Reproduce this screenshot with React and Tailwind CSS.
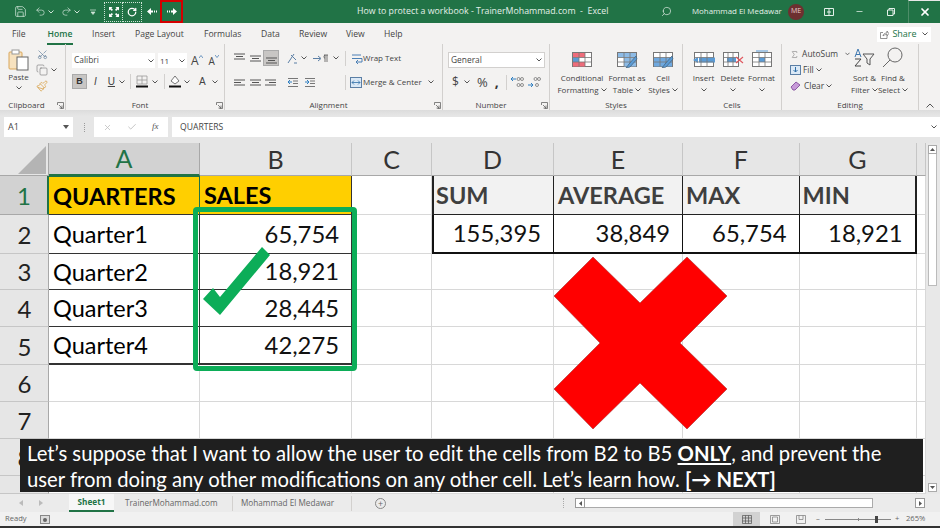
import { Save, Undo2, Redo2, RotateCw, Search, Minus, X, Check, Sigma, Scissors, Copy, Paintbrush } from 'lucide-react';

const Chev = ({ className = '' }) => (
    <svg width="6" height="4" viewBox="0 0 6 4" className={className}>
        <path d="M0.5 0.5 L3 3 L5.5 0.5" fill="none" stroke="#555" strokeWidth="1" />
    </svg>
);

const Launcher = ({ className = '' }) => (
    <svg width="7" height="7" viewBox="0 0 7 7" className={className}>
        <path d="M0.5 3 V0.5 H6.5 V6.5 H3.5 M2 3 L5 6 M5 3.5 V6 H2.5" fill="none" stroke="#666" strokeWidth="0.8" />
    </svg>
);

const Sep = ({ className = '' }) => <div className={`w-px h-[15px] bg-[#d2d0ce] ${className}`} />;

const Lines = ({ rows, className = '' }) => (
    <svg width="11" height="11" viewBox="0 0 11 11" className={className}>
        {rows.map(([x1, x2, y]) => (
            <path key={y} d={`M${x1} ${y} H${x2}`} stroke="#555" strokeWidth="1" />
        ))}
    </svg>
);

// tabelletje voor de grote knoppen in de ribbon
const TableIcon = ({ children, fill }) => (
    <svg width="22" height="20" viewBox="0 -2 22 20">
        <rect x="1.5" y="2.5" width="19" height="14" fill="#fff" stroke="#777" />
        {children}
        <path d="M1.5 7.5 H20.5 M1.5 12 H20.5 M8 2.5 V16.5 M14 2.5 V16.5" stroke="#777" strokeWidth="0.8" fill="none" />
        {fill}
    </svg>
);

const Brush = () => (
    <path d="M20 6 L13 14 L10 18 L14 17 L21 9 Z" fill="#5b9bd5" stroke="#44617b" strokeWidth="0.7" />
);

const Big = ({ w, icon, a, b, last = true }) => (
    <div className="flex flex-col items-center" style={{ width: w }}>
        <div className="h-[24px] flex items-end justify-center">{icon}</div>
        <div className="mt-[4px] h-[12px] leading-[12px] whitespace-nowrap">{a}</div>
        <div className="h-[11px] leading-[11px] whitespace-nowrap flex items-center gap-[2px]">
            {b}
            {last && <Chev />}
        </div>
    </div>
);

const Group = ({ w, label, launcher, children, labelClass = '' }) => (
    <div className="relative h-[66px] border-r border-[#d2d0ce] shrink-0" style={{ width: w }}>
        <div className="h-[55px]">{children}</div>
        <div className={`text-center leading-[11px] ${labelClass}`}>{label}</div>
        {launcher && <Launcher className="absolute right-[1px] bottom-[1px]" />}
    </div>
);

const Cell = ({ className = '', children }) => (
    <div className={`flex items-center pt-[2px] border-r border-b overflow-hidden whitespace-nowrap ${className}`}>{children}</div>
);

const Grid = ({ className = '', children }) => <Cell className={`border-[#d8d8d8] bg-white ${className}`}>{children}</Cell>;

const Head = ({ children, on }) => (
    <div className={`flex items-center justify-center pt-[1px] border-r text-[25px] font-[Lato,sans-serif] ${on ? 'bg-[#d2d2d2] border-[#a8a8a8] border-b-2 border-b-[#217346] text-[#217346]' : 'bg-[#e6e6e6] border-[#c6c6c6] border-b border-b-[#a8a8a8] text-[#333]'}`}>
        {children}
    </div>
);

const Row = ({ children, on }) => (
    <div className={`flex items-center justify-center pt-[2px] pl-[1px] border-b overflow-hidden text-[24px] font-[Lato,sans-serif] ${on ? 'bg-[#d2d2d2] border-[#a8a8a8] border-r-2 border-r-[#217346] text-[#217346]' : 'bg-[#e6e6e6] border-[#c6c6c6] border-r border-r-[#a8a8a8] text-[#222]'}`}>
        {children}
    </div>
);

const dark = 'border-[#333] bg-white text-black pl-[4px] text-[23.5px]';
const num = 'border-[#333] bg-white text-[#111] justify-end pr-[12px] text-[23.8px]';
const yellow = 'border-[#333] bg-[#ffcf00] text-black pl-[4px] font-bold text-[23.5px]';
const grey = 'border-[#222] bg-[#f2f2f2] text-[#3f3f3f] font-bold text-[23.5px]';
const num2 = 'border-[#111] bg-white text-[#111] justify-end pr-[12px] text-[23.8px]';

const App = () => {
    return (
        <div className="relative w-[940px] h-[528px] overflow-hidden flex flex-col bg-[#e6e6e6] text-[9px] text-[#444] font-['Open_Sans',sans-serif]">
            {/* titelbalk */}
            <div className="h-[23px] shrink-0 flex items-center bg-[#217346] text-white">
                <Save size={13} strokeWidth={1.4} className="ml-[14px] text-[#cfe4d7]" />
                <Undo2 size={11} strokeWidth={1.5} className="ml-[8px] text-[#cfe4d7]" />
                <Chev className="ml-[2px] [&_path]:stroke-[#cfe4d7]" />
                <Redo2 size={11} strokeWidth={1.5} className="ml-[7px] text-[#cfe4d7]" />
                <Chev className="ml-[2px] [&_path]:stroke-[#cfe4d7]" />
                <svg width="6" height="6" viewBox="0 0 6 6" className="ml-[10px]">
                    <path d="M0 1 H6 M1 3 L3 5.5 L5 3 Z" stroke="#cfe4d7" fill="#cfe4d7" strokeWidth="0.7" />
                </svg>
                <div className="ml-[8px] h-[20px] w-[19px] flex items-center justify-center border border-dotted border-[#cfe4d7]">
                    <svg width="10" height="10" viewBox="0 0 10 10">
                        <path d="M0 0 H3.5 L2.4 1.2 L4 2.8 L2.8 4 L1.2 2.4 L0 3.5 Z M10 0 H6.5 L7.6 1.2 L6 2.8 L7.2 4 L8.8 2.4 L10 3.5 Z M0 10 H3.5 L2.4 8.8 L4 7.2 L2.8 6 L1.2 7.6 L0 6.5 Z M10 10 H6.5 L7.6 8.8 L6 7.2 L7.2 6 L8.8 7.6 L10 6.5 Z" fill="#fff" />
                    </svg>
                </div>
                <div className="h-[20px] w-[19px] flex items-center justify-center border border-l-0 border-dotted border-[#cfe4d7]">
                    <RotateCw size={10} strokeWidth={3} />
                </div>
                <svg width="10" height="7" viewBox="0 0 10 7" className="ml-[5px]">
                    <path d="M0 3.5 L4 0 V7 Z M4 2.5 H6 V4.5 H4 Z M7 2.5 H8 V4.5 H7 Z M9 2.5 H10 V4.5 H9 Z" fill="#fff" />
                </svg>
                <div className="ml-[3px] h-[23px] w-[23px] flex items-center justify-center border-2 border-[#d40000]">
                    <svg width="10" height="7" viewBox="0 0 10 7">
                        <path d="M10 3.5 L6 0 V7 Z M6 2.5 H4 V4.5 H6 Z M3 2.5 H2 V4.5 H3 Z M1 2.5 H0 V4.5 H1 Z" fill="#fff" />
                    </svg>
                </div>
                <div className="ml-[174px] w-[230px] whitespace-nowrap text-[8.8px] text-[#e4f0e9]">How to protect a workbook - TrainerMohammad.com&nbsp; -&nbsp; Excel</div>
                <Search size={11} strokeWidth={1.6} className="ml-[74px] -scale-x-100 text-[#d8e8de]" />
                <div className="ml-[20px] w-[90px] whitespace-nowrap text-[7.9px] text-[#e4f0e9]">Mohammad El Medawar</div>
                <div className="ml-[6px] w-[16px] h-[16px] rounded-full bg-[#6d3030] flex items-center justify-center text-[7px] text-[#e6cfcf]">ME</div>
                <svg width="10" height="8" viewBox="0 0 10 8" className="ml-[20px]">
                    <path d="M0.5 0.5 H9.5 V7.5 H0.5 Z M5 0.5 V7.5 M3 4 H7" fill="none" stroke="#e4f0e9" />
                </svg>
                <Minus size={9} className="ml-[21px] text-[#e4f0e9]" />
                <svg width="8" height="8" viewBox="0 0 8 8" className="ml-[23px]">
                    <path d="M0.5 2 H6 V7.5 H0.5 Z M2 2 V0.5 H7.5 V6 H6" fill="none" stroke="#e4f0e9" />
                </svg>
                <div className="ml-[13px] h-[23px] flex-1 flex items-center justify-center border-l border-[#4d8d68] border-t border-t-[#e8e8e8]">
                    <X size={12} strokeWidth={3.5} />
                </div>
            </div>

            {/* menu */}
            <div className="h-[21px] shrink-0 flex items-center pt-[1px] bg-[#f3f2f1] text-[8.6px] whitespace-nowrap">
                <span className="ml-[12px] w-[35px]">File</span>
                <div className="w-[26px] h-[21px] flex flex-col items-center justify-center relative text-[#217346] font-semibold">
                    <span>Home</span>
                    <div className="absolute bottom-[0px] left-0 right-0 h-[2px] bg-[#217346]" />
                </div>
                <span className="ml-[19px] w-[43px]">Insert</span>
                <span className="w-[69px]">Page Layout</span>
                <span className="w-[57px]">Formulas</span>
                <span className="w-[38px]">Data</span>
                <span className="w-[47px]">Review</span>
                <span className="w-[38px]">View</span>
                <span>Help</span>
                <div className="ml-auto mr-[9px] h-[15px] w-[54px] bg-white flex items-center justify-center gap-[3px] text-[9px] text-[#217346]">
                    <svg width="9" height="9" viewBox="0 0 9 9">
                        <path d="M3 2.5 H0.5 V8.5 H7 V6 M3 6 C3 4 5 3 7 3 V1 L8.8 3.5 L7 6 V4.5 C5 4.5 4 5 3 6Z" fill="none" stroke="#666" strokeWidth="0.7" />
                    </svg>
                    <span>Share</span>
                    <Chev className="ml-[2px]" />
                </div>
            </div>

            {/* ribbon */}
            <div className="h-[66px] shrink-0 flex bg-[#f3f2f1] text-[8px]">
                <Group w={66} label="Clipboard" launcher labelClass="pr-[12px]">
                    <div className="flex">
                        <div className="w-[36px] pl-[1px] flex flex-col items-center pt-[5px]">
                            <svg width="21" height="22" viewBox="0 0 21 22">
                                <rect x="1" y="3" width="13" height="17" rx="1" fill="#f7e2bf" stroke="#d9a65a" />
                                <rect x="4" y="1" width="7" height="4" fill="#fff" stroke="#999" />
                                <rect x="9" y="8" width="11" height="13" fill="#fff" stroke="#666" />
                            </svg>
                            <span className="leading-[11px]">Paste</span>
                            <Chev className="mt-[4px]" />
                        </div>
                        <div className="flex flex-col pt-[5px] gap-[4px]">
                            <Scissors size={11} strokeWidth={1.2} className="ml-[1px] text-[#44678a] -rotate-90" />
                            <div className="flex items-center gap-[3px]">
                                <Copy size={12} strokeWidth={1.1} className="text-[#666]" />
                                <Chev />
                            </div>
                            <Paintbrush size={12} strokeWidth={1.4} className="text-[#d69a3a]" />
                        </div>
                    </div>
                </Group>

                <Group w={159} label="Font" launcher labelClass="pr-[10px]">
                    <div className="flex items-center pl-[6px] pt-[9px]">
                        <div className="w-[83px] h-[15px] bg-white flex items-center pl-[2px] justify-between pr-[1px] text-[8.4px]">
                            Calibri
                            <Chev />
                        </div>
                        <div className="ml-[3px] w-[29px] h-[15px] bg-white flex items-center pl-[2px] justify-between pr-[2px]">
                            11
                            <Chev />
                        </div>
                        <span className="ml-[4px] text-[12px] leading-[12px]">A</span>
                        <svg width="4" height="3" viewBox="0 0 4 3" className="self-start mt-[2px]"><path d="M0 3 L2 0.5 L4 3" fill="none" stroke="#4a7fb5" strokeWidth="0.8" /></svg>
                        <span className="ml-[6px] text-[10px] leading-[12px]">A</span>
                        <svg width="4" height="3" viewBox="0 0 4 3" className="self-start mt-[2px]"><path d="M0 0 L2 2.5 L4 0" fill="none" stroke="#4a7fb5" strokeWidth="0.8" /></svg>
                    </div>
                    <div className="flex items-center pl-[6px] mt-[6px] text-[9px] font-['Liberation_Sans',sans-serif]">
                        <div className="w-[15px] h-[15px] bg-[#c8c6c4] border border-[#aaa] flex items-center justify-center font-bold text-[#333]">B</div>
                        <span className="ml-[7px] italic text-[10px]">I</span>
                        <span className="ml-[11px] underline text-[10px]">U</span>
                        <Chev className="ml-[4px]" />
                        <Sep className="ml-[5px]" />
                        <svg width="12" height="13" viewBox="0 0 12 13" className="ml-[5px]">
                            <path d="M1 1 H11 V9 H1 Z M6 1 V9 M1 5 H11" fill="none" stroke="#999" strokeWidth="0.8" />
                            <path d="M0 11.5 H12" stroke="#111" strokeWidth="2" />
                        </svg>
                        <Chev className="ml-[4px]" />
                        <Sep className="ml-[6px]" />
                        <svg width="12" height="13" viewBox="0 0 12 13" className="ml-[4px]">
                            <path d="M6 1 L10 6 L6 9 L2 6 Z" fill="#fff" stroke="#555" strokeWidth="0.8" />
                            <path d="M0 11.5 H12" stroke="#111" strokeWidth="2" />
                        </svg>
                        <Chev className="ml-[3px]" />
                        <span className="ml-[9px] text-[10px]">A</span>
                        <Chev className="ml-[6px]" />
                    </div>
                </Group>

                <Group w={218} label="Alignment" launcher labelClass="pr-[10px]">
                    <div className="flex items-center pl-[9px] pt-[5px] h-[23px]">
                        <Lines rows={[[0, 11, 1], [2, 9, 3.5], [0, 11, 6]]} />
                        <Lines rows={[[0, 11, 3], [2, 9, 5.5], [0, 11, 8]]} className="ml-[5px]" />
                        <div className="ml-[2px] w-[16px] h-[16px] bg-[#c8c6c4] border border-[#aaa] flex items-center justify-center">
                            <Lines rows={[[0, 11, 5], [2, 9, 7.5], [0, 11, 10]]} />
                        </div>
                        <svg width="11" height="11" viewBox="0 0 11 11" className="ml-[8px]">
                            <path d="M1 10 L7 1 M4 2 L9 7 M7 10 H10" fill="none" stroke="#5b7fa5" />
                        </svg>
                        <Chev className="ml-[3px]" />
                        <svg width="18" height="9" viewBox="0 0 18 9" className="ml-[6px]">
                            <path d="M0 4.5 H7 M5 2 L8 4.5 L5 7" fill="none" stroke="#5b7fa5" />
                            <path d="M11 1 H15 M12 1 V8 M14 1 V8 M12 1 A2 2 0 0 0 12 4.5" fill="none" stroke="#555" strokeWidth="0.8" />
                        </svg>
                        <Chev className="ml-[2px]" />
                        <Sep className="ml-[6px]" />
                        <svg width="11" height="11" viewBox="0 0 11 11" className="ml-[6px]">
                            <path d="M0 2 H9 M0 5.5 H10 V9 H4 M6 7 L4 9 L6 11" fill="none" stroke="#4a7fb5" strokeWidth="1" />
                        </svg>
                        <span className="whitespace-nowrap">Wrap Text</span>
                    </div>
                    <div className="flex items-center pl-[9px] mt-[6px] h-[18px]">
                        <Lines rows={[[0, 11, 3], [0, 7, 5.5], [0, 11, 8]]} />
                        <Lines rows={[[0, 11, 3], [2, 9, 5.5], [0, 11, 8]]} className="ml-[5px]" />
                        <Lines rows={[[0, 11, 3], [4, 11, 5.5], [0, 11, 8]]} className="ml-[4px]" />
                        <svg width="10" height="9" viewBox="0 0 10 9" className="ml-[12px]">
                            <path d="M0 0.5 H10 M5 3 H10 M5 5.5 H10 M0 8.5 H10" stroke="#777" fill="none" />
                            <path d="M4 4 H0 M2 2 L0 4 L2 6" stroke="#2f7fc1" fill="none" />
                        </svg>
                        <svg width="10" height="9" viewBox="0 0 10 9" className="ml-[7px]">
                            <path d="M0 0.5 H10 M5 3 H10 M5 5.5 H10 M0 8.5 H10" stroke="#777" fill="none" />
                            <path d="M0 4 H4 M2 2 L4 4 L2 6" stroke="#2f7fc1" fill="none" />
                        </svg>
                        <Sep className="ml-[30px]" />
                        <svg width="12" height="11" viewBox="0 0 12 11" className="ml-[4px]">
                            <rect x="0.5" y="0.5" width="11" height="10" fill="#dbe9f6" stroke="#5b7fa5" />
                            <path d="M2 5.5 H10 M4 3.5 L2 5.5 L4 7.5 M8 3.5 L10 5.5 L8 7.5" fill="none" stroke="#2f6fa8" strokeWidth="0.8" />
                        </svg>
                        <span className="ml-px whitespace-nowrap">Merge &amp; Center</span>
                        <Chev className="ml-[6px]" />
                    </div>
                </Group>

                <Group w={107} label="Number" launcher labelClass="pr-[10px]">
                    <div className="pl-[5px] pt-[8px]">
                        <div className="w-[97px] h-[16px] bg-white border border-[#d2d0ce] flex items-center pl-[2px] justify-between pr-[2px] text-[8.4px]">
                            General
                            <Chev />
                        </div>
                    </div>
                    <div className="flex items-center pl-[9px] mt-[5px] h-[18px]">
                        <span className="text-[12px] leading-[14px]">$</span>
                        <Chev className="ml-[5px]" />
                        <span className="ml-[7px] text-[13px] leading-[13px]">%</span>
                        <span className="ml-[7px] text-[14px] leading-[10px] font-bold text-[#333]">,</span>
                        <Sep className="ml-[7px]" />
                        <svg width="13" height="12" viewBox="0 0 13 12" className="ml-[4px]">
                            <path d="M0 3 H5 M2 1 L0 3 L2 5" fill="none" stroke="#2f7fc1" />
                            <circle cx="7.5" cy="3" r="1.5" fill="none" stroke="#666" strokeWidth="0.7" />
                            <circle cx="11" cy="3" r="1.5" fill="none" stroke="#666" strokeWidth="0.7" />
                            <circle cx="7.5" cy="9" r="1.5" fill="none" stroke="#666" strokeWidth="0.7" />
                            <circle cx="11" cy="9" r="1.5" fill="none" stroke="#666" strokeWidth="0.7" />
                        </svg>
                        <svg width="13" height="12" viewBox="0 0 13 12" className="ml-[4px]">
                            <circle cx="7.5" cy="3" r="1.5" fill="none" stroke="#666" strokeWidth="0.7" />
                            <circle cx="11" cy="3" r="1.5" fill="none" stroke="#666" strokeWidth="0.7" />
                            <path d="M0 9 H5 M3 7 L5 9 L3 11" fill="none" stroke="#2f7fc1" />
                            <circle cx="9" cy="9" r="1.5" fill="none" stroke="#666" strokeWidth="0.7" />
                        </svg>
                    </div>
                </Group>

                <Group w={133} label="Styles">
                    <div className="flex pl-[10px]">
                        <Big w={44} a="Conditional" b="Formatting" icon={
                            <TableIcon>
                                <rect x="2" y="3" width="12" height="4.5" fill="#ee6d7b" />
                                <rect x="2" y="7.5" width="6" height="4.5" fill="#5b9bd5" />
                                <rect x="2" y="12" width="12" height="4.5" fill="#ee6d7b" />
                            </TableIcon>
                        } />
                        <Big w={46} a="Format as" b="Table" icon={
                            <TableIcon fill={<Brush />}>
                                <rect x="2" y="3" width="18" height="4.5" fill="#8dbbe6" />
                                <rect x="8" y="7.5" width="12" height="9" fill="#8dbbe6" />
                            </TableIcon>
                        } />
                        <Big w={26} a="Cell" b="Styles" icon={
                            <TableIcon fill={<Brush />}>
                                <rect x="2" y="7.5" width="18" height="9" fill="#6fa9e0" />
                            </TableIcon>
                        } />
                    </div>
                </Group>

                <Group w={99} label="Cells">
                    <div className="flex pl-[6px]">
                        <Big w={29} a="Insert" b="" icon={
                            <TableIcon>
                                <rect x="6" y="7.5" width="16" height="5" fill="#5b9bd5" />
                                <path d="M0 10 L5 7 V13 Z" fill="#5b9bd5" />
                            </TableIcon>
                        } />
                        <Big w={29} a="Delete" b="" icon={
                            <svg width="22" height="20" viewBox="0 -2 22 20">
                                <rect x="1.5" y="2.5" width="15" height="14" fill="#fff" stroke="#777" />
                                <rect x="5" y="7.5" width="9" height="4.5" fill="#5b9bd5" />
                                <path d="M1.5 7.5 H16 M1.5 12 H16 M6 2.5 V16.5 M11 2.5 V16.5" stroke="#777" strokeWidth="0.8" />
                                <path d="M14 7 L21 13 M21 7 L14 13" stroke="#e0565e" strokeWidth="1.1" />
                            </svg>
                        } />
                        <Big w={29} a="Format" b="" icon={
                            <TableIcon>
                                <rect x="8" y="7.5" width="6" height="4.5" fill="#5b9bd5" />
                                <path d="M5 1 H17" stroke="#5b9bd5" />
                            </TableIcon>
                        } />
                    </div>
                </Group>

                <Group w={137} label="Editing">
                    <div className="flex">
                        <div className="w-[68px] pl-[8px] pt-[3px] flex flex-col gap-[2px] shrink-0 text-[8.4px]">
                            <div className="flex items-center h-[14px]">
                                <Sigma size={11} strokeWidth={1.3} className="text-[#666]" />
                                <span className="ml-[3px]">AutoSum</span>
                                <Chev className="ml-[7px]" />
                            </div>
                            <div className="flex items-center h-[14px]">
                                <svg width="11" height="10" viewBox="0 0 11 10">
                                    <rect x="0.5" y="0.5" width="10" height="9" fill="#dbe9f6" stroke="#5b7fa5" />
                                    <path d="M5.5 2 V7 M3.5 5 L5.5 7 L7.5 5" stroke="#2f6fa8" fill="none" />
                                </svg>
                                <span className="ml-[2px]">Fill</span>
                                <Chev className="ml-[2px]" />
                            </div>
                            <div className="flex items-center h-[14px]">
                                <svg width="11" height="10" viewBox="0 0 11 10">
                                    <path d="M1 6 L6 1 L10 4 L5 9 H3 Z" fill="#c79ad8" stroke="#8d5aa5" />
                                </svg>
                                <span className="ml-[3px]">Clear</span>
                                <Chev className="ml-[2px]" />
                            </div>
                        </div>
                        <div className="flex">
                            <Big w={29} a="Sort &amp;" b="Filter" icon={
                                <svg width="22" height="20" viewBox="0 0 22 20">
                                    <path d="M1 9 L4 1 L7 9 M2 6.5 H6" fill="none" stroke="#3f78b0" />
                                    <path d="M1 11 H7 L1 18 H7" fill="none" stroke="#444" />
                                    <path d="M9 6 H20 L16 11 V17 L13 15 V11 Z" fill="none" stroke="#555" />
                                </svg>
                            } />
                            <Big w={28} a="Find &amp;" b="Select" icon={
                                <svg width="22" height="22" viewBox="0 0 22 22">
                                    <circle cx="13" cy="9" r="7" fill="none" stroke="#666" />
                                    <path d="M8 14 L1 21" stroke="#666" />
                                </svg>
                            } />
                        </div>
                    </div>
                </Group>
                <div className="flex-1 flex items-end justify-center pb-[2px]">
                    <svg width="8" height="5" viewBox="0 0 8 5">
                        <path d="M0.5 4.5 L4 1 L7.5 4.5" fill="none" stroke="#555" />
                    </svg>
                </div>
            </div>

            {/* formulebalk */}
            <div className="h-[33px] shrink-0 pt-[7px] flex items-start bg-[linear-gradient(#dcdcdc,#e6e6e6_6px)]">
                <div className="ml-[4px] w-[69px] h-[20px] bg-white flex items-center justify-between pl-[4px] pr-[4px]">
                    A1
                    <svg width="6" height="4" viewBox="0 0 6 4"><path d="M0 0 H6 L3 4Z" fill="#555" /></svg>
                </div>
                <div className="ml-[11px] mt-[6px] h-[9px] w-px border-l border-dotted border-[#999]" />
                <div className="ml-[9px] w-[74px] h-[20px] bg-white flex items-center pl-[9px] text-[#bbb]">
                    <X size={9} />
                    <Check size={10} className="ml-[15px]" />
                    <span className="ml-[15px] text-[#555] italic font-['Liberation_Serif',serif]">fx</span>
                </div>
                <div className="ml-[4px] w-[768px] h-[20px] bg-white flex items-center pl-[8px] justify-between pr-[3px] text-[8.6px]">
                    QUARTERS
                    <Chev />
                </div>
            </div>

            {/* werkblad */}
            <div className="relative flex h-[351px] shrink-0">
                <div className="grid grid-cols-[49px_151px_152px_80px_122px_129px_116.5px_117px_9.5px] grid-rows-[33px_39px_38.5px_36.5px_37px_38px_37px_37px_37px_18px] font-[Lato,sans-serif]">
                    <div className="bg-[#e6e6e6] border-r border-b border-[#a8a8a8] flex items-end justify-end pr-[1px] pb-[1px]">
                        <svg width="29" height="28" viewBox="0 0 29 28"><path d="M28 0 V28 H0 Z" fill="#b4b4b4" /></svg>
                    </div>
                    <Head on>A</Head><Head>B</Head><Head>C</Head><Head>D</Head><Head>E</Head><Head>F</Head><Head>G</Head><Head />

                    <Row on>1</Row>
                    <Cell className={`${yellow} border-t border-t-[#217346] border-r-[#217346]`}>QUARTERS</Cell>
                    <Cell className={yellow}>SALES</Cell>
                    <Grid />
                    <Cell className={`${grey} border-l-2 pl-[2px]`}>SUM</Cell>
                    <Cell className={`${grey} pl-[4px]`}>AVERAGE</Cell>
                    <Cell className={`${grey} pl-[3px]`}>MAX</Cell>
                    <Cell className={`${grey} border-r-2 pl-[3px]`}>MIN</Cell>
                    <Grid />

                    <Row>2</Row>
                    <Cell className={dark}>Quarter1</Cell>
                    <Cell className={num}>65,754</Cell>
                    <Grid />
                    <Cell className={`${num2} border-l-2 border-b-2`}>155,395</Cell>
                    <Cell className={`${num2} border-b-2`}>38,849</Cell>
                    <Cell className={`${num2} border-b-2`}>65,754</Cell>
                    <Cell className={`${num2} border-b-2 border-r-2`}>18,921</Cell>
                    <Grid />

                    <Row>3</Row>
                    <Cell className={dark}>Quarter2</Cell>
                    <Cell className={num}>18,921</Cell>
                    <Grid /><Grid /><Grid /><Grid /><Grid /><Grid />

                    <Row>4</Row>
                    <Cell className={dark}>Quarter3</Cell>
                    <Cell className={num}>28,445</Cell>
                    <Grid /><Grid /><Grid /><Grid /><Grid /><Grid />

                    <Row>5</Row>
                    <Cell className={`${dark} border-b-2`}>Quarter4</Cell>
                    <Cell className={`${num} border-b-2`}>42,275</Cell>
                    <Grid /><Grid /><Grid /><Grid /><Grid /><Grid />

                    <Row>6</Row>
                    <Grid /><Grid /><Grid /><Grid /><Grid /><Grid /><Grid /><Grid />
                    <Row>7</Row>
                    <Grid /><Grid /><Grid /><Grid /><Grid /><Grid /><Grid /><Grid />
                    <Row>8</Row>
                    <Grid /><Grid /><Grid /><Grid /><Grid /><Grid /><Grid /><Grid />
                    <Row />
                    <Grid /><Grid /><Grid /><Grid /><Grid /><Grid /><Grid /><Grid />
                </div>

                {/* schuifbalk rechts */}
                <div className="flex-1 pt-[2px] pl-[2px] pr-[3px] flex flex-col bg-[#e8e8e8]">
                    <div className="h-[9px] bg-white border border-[#aaa] flex items-center justify-center">
                        <svg width="5" height="3" viewBox="0 0 5 3"><path d="M2.5 0 L5 3 H0Z" fill="#555" /></svg>
                    </div>
                    <div className="h-[132px] bg-white border border-[#bbb] border-t-0" />
                    <div className="mt-auto mb-[2px] h-[9px] bg-white border border-[#aaa] flex items-center justify-center">
                        <svg width="5" height="3" viewBox="0 0 5 3"><path d="M2.5 3 L5 0 H0Z" fill="#555" /></svg>
                    </div>
                </div>

                {/* vormen over het werkblad */}
                <svg width="940" height="351" viewBox="0 143 940 351" className="absolute inset-0 pointer-events-none">
                    <rect x="195.5" y="209.5" width="159" height="159" rx="1.5" fill="none" stroke="#0cad58" strokeWidth="5" />
                    <path d="M203 299 L213 288 L220 297 L262 247 L270 255 L220 315 Z" fill="#0cad58" />
                    <path d="M593 257 L640 303 L687 257 L727 296 L680 343 L727 389 L687 429 L640 383 L593 429 L554 389 L600 343 L554 296 Z" fill="#ff0000" stroke="#a83232" strokeWidth="0.6" />
                </svg>

                <div className="absolute left-[20px] top-[296px] w-[903px] h-[53px] bg-[#1f1f1f] pl-[7px] pt-[1px] text-[20.25px] leading-[26px] text-white whitespace-nowrap font-[Lato,sans-serif]">
                    <div>Let’s suppose that I want to allow the user to edit the cells from B2 to B5 <b className="underline">ONLY</b>, and prevent the</div>
                    <div>user from doing any other modifications on any other cell. Let’s learn how. <b>[→ NEXT]</b></div>
                </div>
            </div>

            {/* bladtabs */}
            <div className="h-[18px] shrink-0 flex items-center bg-[#ebebeb] text-[8.2px] text-[#666]">
                <svg width="4" height="6" viewBox="0 0 4 6" className="ml-[19px]"><path d="M4 0 V6 L0 3Z" fill="#bbb" /></svg>
                <svg width="4" height="6" viewBox="0 0 4 6" className="ml-[16px]"><path d="M0 0 V6 L4 3Z" fill="#bbb" /></svg>
                <div className="ml-[26px] w-[45px] h-[18px] bg-[#f7f7f7] border-b-2 border-[#217346] flex items-center justify-center font-bold text-[#217346]">Sheet1</div>
                <span className="ml-[11px] w-[96px] whitespace-nowrap">TrainerMohammad.com</span>
                <Sep className="ml-[11px]" />
                <span className="ml-[8px] w-[100px] whitespace-nowrap">Mohammad El Medawar</span>
                <Sep className="ml-[10px]" />
                <div className="ml-[23px] w-[11px] h-[11px] rounded-full border border-[#888] flex items-center justify-center text-[9px] leading-[9px]">+</div>
                <div className="ml-[177px] h-[10px] border-l border-dotted border-[#aaa]" />
                <div className="ml-[11px] w-[10px] h-[10px] bg-white border border-[#999] flex items-center justify-center">
                    <svg width="3" height="5" viewBox="0 0 3 5"><path d="M3 0 V5 L0 2.5Z" fill="#555" /></svg>
                </div>
                <div className="w-[288px] h-[10px] bg-white border border-[#aaa] border-l-0" />
                <div className="ml-[42px] w-[10px] h-[10px] bg-white border border-[#999] flex items-center justify-center">
                    <svg width="3" height="5" viewBox="0 0 3 5"><path d="M0 0 V5 L3 2.5Z" fill="#555" /></svg>
                </div>
            </div>

            {/* statusbalk */}
            <div className="h-[14px] shrink-0 flex items-center bg-[#f1f1f1] text-[7.6px] text-[#666]">
                <span className="ml-[5px] w-[24px]">Ready</span>
                <svg width="10" height="9" viewBox="0 0 10 9" className="ml-[11px]">
                    <rect x="0.5" y="0.5" width="9" height="8" fill="#ddd" stroke="#888" />
                    <circle cx="5" cy="5" r="2" fill="#666" />
                </svg>
                <div className="ml-[683px] w-[27px] h-[14px] bg-[#d2d2d2] flex items-center justify-center">
                    <svg width="10" height="9" viewBox="0 0 10 9"><path d="M0.5 0.5 H9.5 V8.5 H0.5 Z M3.5 0.5 V8.5 M6.5 0.5 V8.5 M0.5 3 H9.5 M0.5 6 H9.5" fill="none" stroke="#555" strokeWidth="0.7" /></svg>
                </div>
                <svg width="10" height="9" viewBox="0 0 10 9" className="ml-[10px]"><path d="M0.5 0.5 H9.5 V8.5 H0.5 Z M2.5 2 V7 H7.5 V2 Z" fill="none" stroke="#777" strokeWidth="0.7" /></svg>
                <svg width="10" height="9" viewBox="0 0 10 9" className="ml-[16px]"><path d="M0.5 0.5 H9.5 V8.5 H0.5 Z M3 0.5 V4.5 H7 V0.5" fill="none" stroke="#777" strokeWidth="0.7" /></svg>
                <span className="ml-[10px] w-[6px]">–</span>
                <div className="relative ml-[3px] w-[66px] h-px bg-[#888]">
                    <div className="absolute left-[33px] -top-[1px] w-px h-[3px] bg-[#888]" />
                    <div className="absolute left-[50px] -top-[3px] w-[3px] h-[7px] bg-[#444]" />
                </div>
                <span className="ml-[4px] w-[11px]">+</span>
                <span>265%</span>
            </div>
            <div className="h-[2px] shrink-0 bg-[#333]" />
        </div>
    );
};

export default App;
